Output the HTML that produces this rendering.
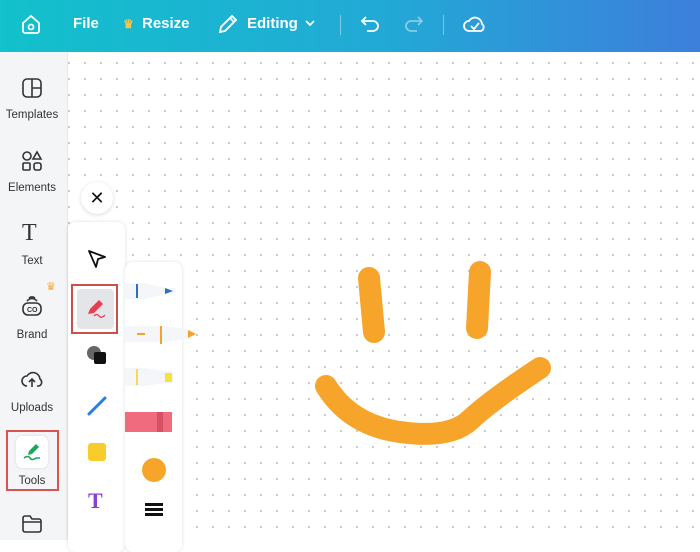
<!DOCTYPE html>
<html><head><style>
body{margin:0;width:700px;height:540px;overflow:hidden;font-family:"Liberation Sans",sans-serif;position:relative;background:#fff}
.top{position:absolute;left:0;top:0;width:700px;height:52px;background:linear-gradient(90deg,#12c1cc,#22a9d6 55%,#3d7fdc);color:#fff;font-weight:bold;font-size:15px}
.top span{position:absolute;top:15px}
.side{position:absolute;left:0;top:52px;width:67px;height:488px;background:#f4f5f7;border-right:1px solid #e6e7ea}
.it{position:absolute;left:0;width:64px;text-align:center;font-size:11.5px;color:#333}
.canvas{position:absolute;left:68px;top:52px;width:632px;height:488px;background-color:#fff;background-image:radial-gradient(circle,#c9cbd0 1px,transparent 1.4px);background-size:16px 16px;background-position:-7px 3px}
.p1{position:absolute;left:68px;top:222px;width:57px;height:330px;background:#fff;border-radius:8px;box-shadow:0 0 4px rgba(0,0,0,.12)}
.p2{position:absolute;left:125px;top:262px;width:57px;height:290px;background:#fff;border-radius:8px;box-shadow:0 0 4px rgba(0,0,0,.12)}
</style></head><body>
<div class="top">
<svg style="position:absolute;left:20px;top:13px" width="22" height="22" viewBox="0 0 22 22" fill="none" stroke="#fff" stroke-width="1.8"><path d="M3 10L11 3l8 7v8a2 2 0 0 1-2 2H5a2 2 0 0 1-2-2z"/><circle cx="11" cy="14" r="2.5"/></svg>
<span style="left:73px">File</span>
<span style="left:123px;color:#f5c44a;font-size:12px;top:17px">♛</span>
<span style="left:142px">Resize</span>
<svg style="position:absolute;left:217px;top:13px" width="22" height="22" viewBox="0 0 22 22" fill="none" stroke="#fff" stroke-width="1.8"><path d="M3 19l1-5L15 3l4 4L8 18z M13 5l4 4"/></svg>
<span style="left:247px">Editing</span>
<svg style="position:absolute;left:304px;top:18px" width="12" height="10" viewBox="0 0 12 10" fill="none" stroke="#fff" stroke-width="1.8"><path d="M2 3l4 4 4-4"/></svg>
<div style="position:absolute;left:340px;top:15px;width:1px;height:20px;background:rgba(255,255,255,.4)"></div>
<svg style="position:absolute;left:360px;top:14px" width="22" height="20" viewBox="0 0 22 20" fill="none" stroke="#fff" stroke-width="1.8"><path d="M6 3L2 7l4 4M2 7h11a5 5 0 0 1 0 10H7"/></svg>
<svg style="position:absolute;left:402px;top:14px" width="22" height="20" viewBox="0 0 22 20" fill="none" stroke="rgba(255,255,255,.45)" stroke-width="1.8"><path d="M16 3l4 4-4 4M20 7H9a5 5 0 0 0 0 10h6"/></svg>
<div style="position:absolute;left:443px;top:15px;width:1px;height:20px;background:rgba(255,255,255,.4)"></div>
<svg style="position:absolute;left:462px;top:13px" width="24" height="22" viewBox="0 0 24 22" fill="none" stroke="#fff" stroke-width="1.8"><path d="M7 18a5 5 0 0 1 0-10 7 7 0 0 1 13 3 4 4 0 0 1-1 7z M9 13l3 3 5-6"/></svg>
</div>
<div class="side">
<svg style="position:absolute;left:21px;top:25px" width="22" height="22" viewBox="0 0 22 22" fill="none" stroke="#333" stroke-width="1.6"><rect x="2" y="2" width="18" height="18" rx="4"/><path d="M11 2v18M11 11h9"/></svg>
<div class="it" style="top:57px">Templates</div>
<svg style="position:absolute;left:21px;top:98px" width="22" height="22" viewBox="0 0 22 22" fill="none" stroke="#333" stroke-width="1.6"><circle cx="6" cy="6" r="4"/><path d="M16 2l4 7h-8z"/><rect x="2" y="13" width="7" height="7" rx="1"/><rect x="13" y="13" width="7" height="7" rx="2"/></svg>
<div class="it" style="top:130px">Elements</div>
<div style="position:absolute;left:22px;top:168px;font-family:'Liberation Serif',serif;font-size:24px;color:#333">T</div>
<div class="it" style="top:203px">Text</div>
<div style="position:absolute;left:46px;top:228px;color:#f1a93a;font-size:11px">♛</div>
<svg style="position:absolute;left:20px;top:243px" width="24" height="22" viewBox="0 0 24 22" fill="none" stroke="#333" stroke-width="1.6"><rect x="3" y="8" width="18" height="12" rx="5"/><path d="M7 6q5-5 10 0M9 3q3-2 6 0"/><text x="7" y="17" font-size="7" fill="#333" stroke="none" font-weight="bold">CO</text></svg>
<div class="it" style="top:277px">Brand</div>
<svg style="position:absolute;left:20px;top:316px" width="24" height="22" viewBox="0 0 24 22" fill="none" stroke="#333" stroke-width="1.6"><path d="M7 18a5 5 0 0 1 0-10 7 7 0 0 1 13 3 4 4 0 0 1-1 7h-2M12 19v-8M9 14l3-3 3 3"/></svg>
<div class="it" style="top:350px">Uploads</div>
<div style="position:absolute;left:6px;top:378px;width:53px;height:61px;border:2px solid #d9534f;box-sizing:border-box"></div>
<div style="position:absolute;left:16px;top:384px;width:32px;height:32px;background:#fff;border-radius:7px;box-shadow:0 0 3px rgba(0,0,0,.12)"></div>
<svg style="position:absolute;left:21px;top:389px" width="22" height="22" viewBox="0 0 22 22"><path d="M7 14l1-4 7-7 3 3-7 7z" fill="#1ea65a"/><path d="M3 17q4-3 6 0t6 0h4" stroke="#1ea65a" stroke-width="1.6" fill="none"/></svg>
<div class="it" style="top:423px">Tools</div>
<svg style="position:absolute;left:21px;top:462px" width="22" height="20" viewBox="0 0 22 20" fill="none" stroke="#333" stroke-width="1.6"><path d="M2 4a2 2 0 0 1 2-2h5l2 3h7a2 2 0 0 1 2 2v9a2 2 0 0 1-2 2H4a2 2 0 0 1-2-2z M2 8h18"/></svg>
</div>
<div class="canvas"></div>
<svg style="position:absolute;left:0;top:0" width="700" height="540" fill="none" stroke="#f7a52a" stroke-linecap="round" stroke-width="22">
<path d="M369 278L374 332"/><path d="M480 272L477 328"/>
<path d="M326 386Q350 425 400 432T470 420T540 368"/>
</svg>
<div style="position:absolute;left:81px;top:182px;width:32px;height:32px;border-radius:50%;background:#fff;box-shadow:0 1px 4px rgba(0,0,0,.15);text-align:center;line-height:32px;font-size:18px;color:#111">✕</div>
<div class="p1"></div>
<div class="p2"></div>
<svg style="position:absolute;left:86px;top:248px" width="22" height="22" viewBox="0 0 22 22" fill="none" stroke="#111" stroke-width="1.8" stroke-linejoin="round"><path d="M3 3l16 6-7 2-2 8z"/></svg>
<div style="position:absolute;left:71px;top:284px;width:47px;height:50px;border:2px solid #c9504b;box-sizing:border-box"></div>
<div style="position:absolute;left:77px;top:289px;width:37px;height:40px;background:#e4e5e8;border-radius:4px"></div>
<svg style="position:absolute;left:85px;top:297px" width="24" height="24" viewBox="0 0 24 24"><path d="M3 17l2-5 9-9 4 4-9 9z" fill="#e73d4f"/><path d="M9 19q3-3 5 0t6-1" stroke="#e73d4f" stroke-width="1.3" fill="none"/></svg>
<div style="position:absolute;left:87px;top:346px;width:14px;height:14px;border-radius:50%;background:#666"></div>
<div style="position:absolute;left:94px;top:352px;width:12px;height:12px;background:#111;border-radius:2px"></div>
<svg style="position:absolute;left:86px;top:395px" width="22" height="22"><path d="M3 19L19 3" stroke="#2b7be0" stroke-width="3" stroke-linecap="round"/></svg>
<div style="position:absolute;left:88px;top:443px;width:18px;height:18px;background:#f8cd2b;border-radius:3px"></div>
<div style="position:absolute;left:88px;top:488px;font-family:'Liberation Serif',serif;font-weight:bold;font-size:22px;color:#8b3fd6">T</div>
<svg style="position:absolute;left:125px;top:278px" width="75" height="210" viewBox="0 0 75 210">
<path d="M0 5h20l20 5 10 0v6l-10 0-20 5H0z" fill="#f4f6f9"/><path d="M12 6v14" stroke="#2a6ec6" stroke-width="2"/><path d="M40 10l8 3-8 3z" fill="#2a6ec6"/>
<path d="M0 48h20l20 0 20 3 10 5-10 5-20 3H0z" fill="#f4f6f9"/><path d="M36 48v18" stroke="#f3a32a" stroke-width="2"/><path d="M63 52l8 4-8 4z" fill="#f3a32a"/><path d="M12 56h8" stroke="#f3a32a" stroke-width="2"/>
<path d="M0 90h20l20 3h8v12h-8l-20 3H0z" fill="#f4f6f9"/><path d="M12 91v16" stroke="#f5d93a" stroke-width="1.8"/><rect x="40" y="95" width="7" height="9" fill="#f5e23a"/>
<rect x="0" y="134" width="47" height="20" fill="#f06b7e"/><rect x="32" y="134" width="6" height="20" fill="#d94f63"/>
<circle cx="29" cy="192" r="12" fill="#f7a52a"/>
</svg>
<div style="position:absolute;left:145px;top:503px;width:18px;height:3px;background:#111;box-shadow:0 5px 0 #111,0 10px 0 #111"></div>
</body></html>
